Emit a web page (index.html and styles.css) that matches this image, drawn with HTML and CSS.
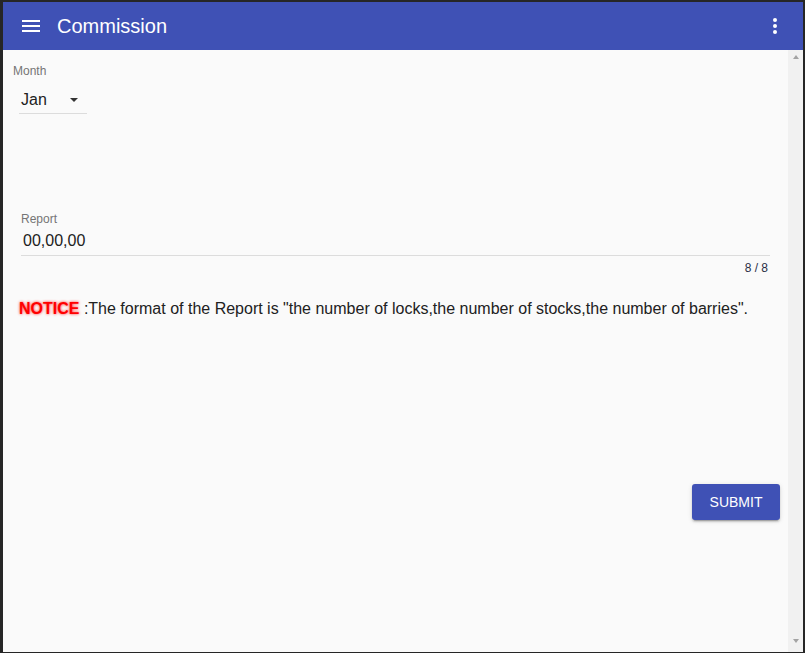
FILE: index.html
```html
<!DOCTYPE html>
<html lang="en">
<head>
<meta charset="utf-8">
<title>Commission</title>
<link rel="stylesheet" href="styles.css">
</head>
<body>
<div class="app">
  <header class="toolbar">
    <svg class="icon menu-icon" width="24" height="24" viewBox="0 0 24 24"><path d="M3 18h18v-2H3v2zm0-5h18v-2H3v2zm0-7v2h18V6H3z" fill="#fff"/></svg>
    <span class="title">Commission</span>
    <svg class="icon more-icon" width="24" height="24" viewBox="0 0 24 24"><circle cx="12" cy="6" r="2" fill="#fff"/><circle cx="12" cy="12" r="2" fill="#fff"/><circle cx="12" cy="18" r="2" fill="#fff"/></svg>
  </header>
  <div class="body">
    <main class="content">
      <div class="month-field">
        <div class="field-label">Month</div>
        <div class="select">
          <span class="select-value">Jan</span>
          <span class="select-arrow"></span>
        </div>
      </div>
      <div class="report-field">
        <div class="field-label">Report</div>
        <div class="input">00,00,00</div>
        <div class="counter">8 / 8</div>
      </div>
      <p class="notice"><span class="notice-tag">NOTICE</span> :The format of the Report is "the number of locks,the number of stocks,the number of barries".</p>
      <div class="actions">
        <button class="submit" type="button">SUBMIT</button>
      </div>
    </main>
    <div class="scrollbar">
      <span class="arrow-up"></span>
      <span class="arrow-down"></span>
    </div>
  </div>
</div>
</body>
</html>
```
FILE: styles.css
```css
html, body {
  margin: 0;
  padding: 0;
}
body {
  background: #262626;
  width: 805px;
  height: 653px;
  overflow: hidden;
  font-family: "Liberation Sans", Arial, sans-serif;
}
.app {
  margin: 2px 2px 1px 3px;
  height: 650px;
  display: flex;
  flex-direction: column;
  background: #fafafa;
}
.toolbar {
  height: 48px;
  flex: none;
  background: #3f51b5;
  display: flex;
  align-items: center;
  color: #fff;
}
.icon {
  display: block;
  flex: none;
}
.menu-icon {
  margin-left: 16px;
}
.title {
  margin-left: 14px;
  font-size: 20px;
  line-height: 24px;
  flex: 1;
}
.more-icon {
  margin-right: 16px;
}
.body {
  flex: 1;
  display: flex;
  min-height: 0;
}
.content {
  flex: 1;
  padding: 14px 8px 0 10px;
}
.field-label {
  font-size: 12px;
  line-height: 14px;
  color: #757575;
}
.select {
  margin: 12px 0 0 6px;
  width: 68px;
  display: flex;
  align-items: center;
  padding-bottom: 4px;
  border-bottom: 1px solid #dcdcdc;
}
.select-value {
  padding-left: 2px;
  font-size: 16px;
  line-height: 19px;
  color: #212121;
}
.select-arrow {
  margin: 1px 9px 0 auto;
  width: 0;
  height: 0;
  border-left: 4px solid transparent;
  border-right: 4px solid transparent;
  border-top: 4px solid #333;
}
.report-field {
  margin: 98px 10px 0 8px;
}
.input {
  margin-top: 5px;
  padding: 0 0 5px 2px;
  font-size: 16px;
  line-height: 19px;
  color: #212121;
  border-bottom: 1px solid #dcdcdc;
}
.counter {
  margin-top: 5px;
  padding-right: 2px;
  text-align: right;
  font-size: 12px;
  line-height: 14px;
  color: #2a2f45;
}
.notice {
  margin: 24px 0 0 6px;
  font-size: 16px;
  line-height: 19px;
  color: #212121;
}
.notice-tag {
  color: #ff0000;
  font-weight: bold;
  text-shadow: 0 0 3px #ff2020;
}
.actions {
  margin-top: 166px;
  display: flex;
  justify-content: flex-end;
}
.submit {
  width: 88px;
  height: 36px;
  padding: 0;
  border: none;
  border-radius: 3px;
  background: #3f51b5;
  color: #fff;
  font-family: "Liberation Sans", Arial, sans-serif;
  font-size: 14px;
  box-shadow: 0 2px 2px 0 rgba(0,0,0,.14), 0 3px 1px -2px rgba(0,0,0,.2), 0 1px 5px 0 rgba(0,0,0,.12);
}
.scrollbar {
  width: 15px;
  flex: none;
  background: #f1f1f1;
  display: flex;
  flex-direction: column;
  justify-content: space-between;
  align-items: center;
  padding: 5px 0 9px;
}
.arrow-up {
  width: 0;
  height: 0;
  border-left: 3.5px solid transparent;
  border-right: 3.5px solid transparent;
  border-bottom: 4px solid #a3a3a3;
}
.arrow-down {
  width: 0;
  height: 0;
  border-left: 3.5px solid transparent;
  border-right: 3.5px solid transparent;
  border-top: 4px solid #a3a3a3;
}
```
